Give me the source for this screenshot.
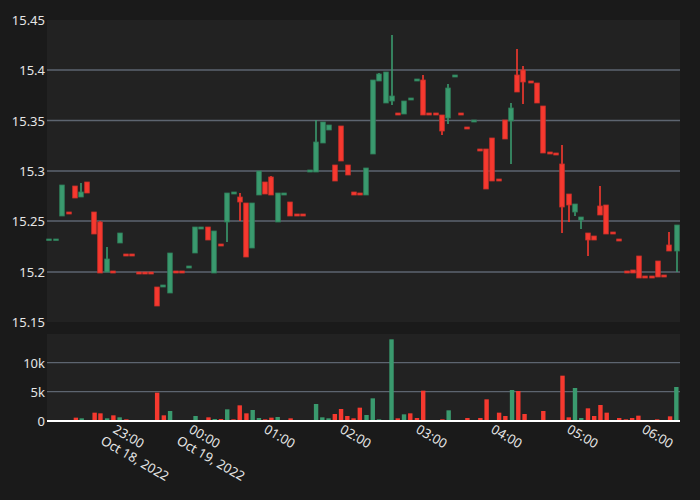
import React from "react";

const G = "#3a9a6e";
const R = "#f6392f";
const C: [number, number, number, number, number, number][] = [
  [49,239,240,239,240,1],[56,239,240,239,240,1],[62,185,216,185,216,1],[69,212,214,212,214,0],
  [75,186,198,186,198,0],[81,192,197,183,197,1],[87,182,193,182,193,0],[94,212,234,212,234,0],
  [100,222,273,221,273,0],[107,259,272,247,272,1],[113,271,273,271,273,0],[120,233,243,233,243,1],
  [126,254,256,254,256,0],[132,254,256,254,256,0],[139,272,274,272,274,0],[145,272,274,272,274,0],
  [151,272,274,272,274,0],[157,287,306,287,306,0],[163,285,287,285,287,1],[170,253,293,253,293,1],
  [176,271,273,271,273,0],[182,271,273,271,273,0],[189,266,268,266,268,1],[195,227,253,227,253,1],
  [201,227,229,227,229,1],[208,227,240,227,240,0],[214,231,273,231,273,1],[221,244,246,244,246,0],
  [227,193,222,193,242,1],[234,192,194,192,194,1],[240,197,202,193,221,0],[246,203,257,203,257,0],
  [252,203,248,203,248,1],[259,171,195,171,195,1],[265,182,194,182,194,0],[271,177,195,176,195,0],
  [278,193,222,193,222,1],[284,193,195,193,195,1],[290,202,216,202,216,0],[297,214,216,214,216,0],
  [303,214,216,214,216,0],[310,170,172,170,172,1],[316,142,172,120,172,1],[323,122,143,122,143,1],
  [329,125,130,125,130,1],[335,165,181,165,181,0],[341,126,161,126,161,0],[348,165,175,165,175,0],
  [354,192,195,192,195,0],[360,193,195,193,195,0],[366,168,195,168,195,1],[373,80,154,80,154,1],
  [379,74,81,73,81,1],[386,72,103,72,103,1],[392,96,101,35,105,1],[398,113,115,113,115,0],
  [404,101,114,101,114,1],[411,98,100,98,100,1],[417,79,81,79,81,1],[423,80,115,75,115,0],
  [429,113,115,113,115,0],[436,113,115,113,115,0],[442,115,131,115,135,0],[448,88,118,84,124,1],
  [455,75,77,75,77,1],[461,113,115,113,115,0],[467,127,129,127,129,0],[474,120,122,120,122,1],
  [480,149,151,149,151,0],[486,149,189,149,189,0],[492,138,181,138,181,0],[499,179,181,179,181,0],
  [505,120,139,120,139,0],[511,108,121,103,164,1],[517,75,92,49,92,0],[523,70,82,66,104,0],
  [531,81,83,81,83,0],[537,83,103,83,103,0],[543,106,153,106,153,0],[550,152,154,152,154,0],
  [556,153,155,153,155,0],[562,164,207,145,233,0],[569,194,205,194,222,0],[575,204,212,204,216,1],
  [581,217,220,217,229,1],[588,233,240,233,256,0],[594,236,240,236,240,0],[600,206,215,186,215,0],
  [606,205,234,205,234,0],[613,232,234,232,234,0],[619,239,241,239,241,0],[627,271,273,271,273,0],
  [633,270,273,270,273,0],[639,256,278,256,278,0],[645,276,278,276,278,0],[652,276,278,276,278,0],
  [658,261,277,261,277,0],[664,275,277,275,277,0],[669,245,251,232,251,0],[677,225,251,225,272,1],
];
const V: [number, number, number][] = [
  [170,263,0],[183,265,1],[212,248,0],[225,250,0],[240,265,1],[254,256,0],[268,262,1],[283,268,0],
  [352,188,0],[367,256,0],[381,243,1],[438,258,1],[467,262,0],[481,267,1],[495,267,0],[509,238,1],
  [523,268,0],[537,226,0],[552,250,0],[566,240,1],[580,264,1],[594,268,0],[608,263,0],[622,261,1],
  [651,265,0],[708,222,1],[722,262,1],[736,265,1],[750,252,0],[764,237,0],[778,258,0],[792,265,0],
  [806,233,0],[821,255,1],[835,205,1],[849,268,1],[877,28,1],[891,265,0],[905,253,1],[919,250,0],
  [934,264,0],[948,182,0],[991,268,0],[1005,241,1],[1047,264,0],[1076,264,0],[1090,208,0],
  [1118,248,0],[1132,258,0],[1147,180,1],[1161,183,0],[1175,252,0],[1217,243,0],[1260,137,0],
  [1274,262,0],[1288,174,1],[1302,264,1],[1317,235,0],[1331,258,0],[1345,225,0],[1359,248,0],
  [1387,264,0],[1402,268,0],[1416,264,0],[1430,257,0],[1472,268,0],[1501,259,0],[1515,171,1],
];
const priceGrid = [70, 120.5, 171, 221, 272];
const priceLabels: [string, number][] = [["15.45",20],["15.4",70],["15.35",120.5],["15.3",171],["15.25",221],["15.2",272],["15.15",322]];
const volLabels: [string, number][] = [["10k",362.7],["5k",391.7],["0",421]];
const ticks: [string, number, string?][] = [["23:00",119,"Oct 18, 2022"],["00:00",195,"Oct 19, 2022"],["01:00",270],["02:00",346],["03:00",422],["04:00",497],["05:00",573],["06:00",648]];

export default function App() {
  return (
    <div className="w-[700px] h-[500px] bg-[#1a1a1a] overflow-hidden font-['DejaVu_Sans',sans-serif]">
      <svg width="700" height="500">
        <rect x="47" y="20" width="633" height="302" fill="#222222" />
        <rect x="47" y="334" width="633" height="87" fill="#222222" />
        {priceGrid.map((y) => (
          <line key={y} x1="47" x2="680" y1={y} y2={y} stroke="#5d6570" strokeWidth="1.3" />
        ))}
        <line x1="47" x2="680" y1="362.7" y2="362.7" stroke="#5d6570" strokeWidth="1.3" />
        <line x1="47" x2="680" y1="391.7" y2="391.7" stroke="#5d6570" strokeWidth="1.3" />
        {priceLabels.map(([t, y]) => (
          <text key={t} x="45" y={y + 5} textAnchor="end" fontSize="13" fill="#e6e6e6">{t}</text>
        ))}
        {volLabels.map(([t, y]) => (
          <text key={t} x="45" y={y + 5} textAnchor="end" fontSize="13" fill="#e6e6e6">{t}</text>
        ))}
        {C.map(([x, bt, bb, wt, wb, up], i) => {
          const col = up ? G : R;
          const h = Math.max(bb - bt, 1.5);
          return (
            <g key={i}>
              <line x1={x} x2={x} y1={wt} y2={wb} stroke={col} strokeWidth="1.6" />
              <rect x={x - 2.3} y={bt} width="4.6" height={h} fill={col} stroke={up ? "#2f7d59" : "#c8302a"} strokeWidth="0.8" />
            </g>
          );
        })}
        {V.map(([zx, zy, up], i) => {
          const x = zx / 2.24;
          const y = 330 + zy / 3;
          return <rect key={i} x={x - 2.2} y={y} width="4.4" height={Math.max(420 - y, 0.5)} fill={up ? G : R} />;
        })}
        <line x1="47" x2="680" y1="421" y2="421" stroke="#ffffff" strokeWidth="2" />
        {ticks.map(([t, x, d]) => (
          <text key={t} transform={`translate(${x - 7},${432}) rotate(30)`} fontSize="13" fill="#e6e6e6">
            <tspan x="0" y="0">{t}</tspan>
            {d && <tspan x="-5" y="16">{d}</tspan>}
          </text>
        ))}
      </svg>
    </div>
  );
}
